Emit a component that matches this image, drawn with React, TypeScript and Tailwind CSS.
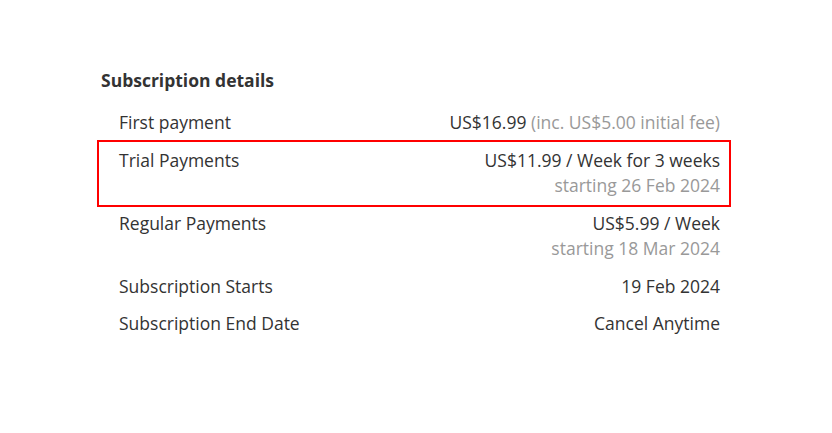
const rows = [
  { label: "First payment", value: "US$16.99", note: "(inc. US$5.00 initial fee)", sub: null, highlight: false },
  { label: "Trial Payments", value: "US$11.99 / Week for 3 weeks", note: null, sub: "starting 26 Feb 2024", highlight: true },
  { label: "Regular Payments", value: "US$5.99 / Week", note: null, sub: "starting 18 Mar 2024", highlight: false },
  { label: "Subscription Starts", value: "19 Feb 2024", note: null, sub: null, highlight: false },
  { label: "Subscription End Date", value: "Cancel Anytime", note: null, sub: null, highlight: false },
]

export default function App() {
  return (
    <div
      className="w-[832px] h-[433px] bg-white text-[#333333]"
      style={{ fontFamily: '"Open Sans", sans-serif' }}
    >
      <div className="w-[630px] ml-[99px] pt-[66px]">
        <h2 className="pl-[2px] text-[17.5px] leading-[28px] font-bold">Subscription details</h2>
        <div className="mt-[10px] flex flex-col">
          {rows.map((row) => (
            <div
              key={row.label}
              className={
                "flex justify-between pl-[20px] pr-[9px] py-[6px] text-[17.5px] leading-[25.5px] " +
                (row.highlight ? "outline-2 outline-solid outline-[#ff0000]" : "")
              }
            >
              <span>{row.label}</span>
              <div className="flex flex-col items-end">
                <span>
                  {row.value}
                  {row.note && <span className="text-[#999999]"> {row.note}</span>}
                </span>
                {row.sub && <span className="text-[#999999]">{row.sub}</span>}
              </div>
            </div>
          ))}
        </div>
      </div>
    </div>
  )
}
